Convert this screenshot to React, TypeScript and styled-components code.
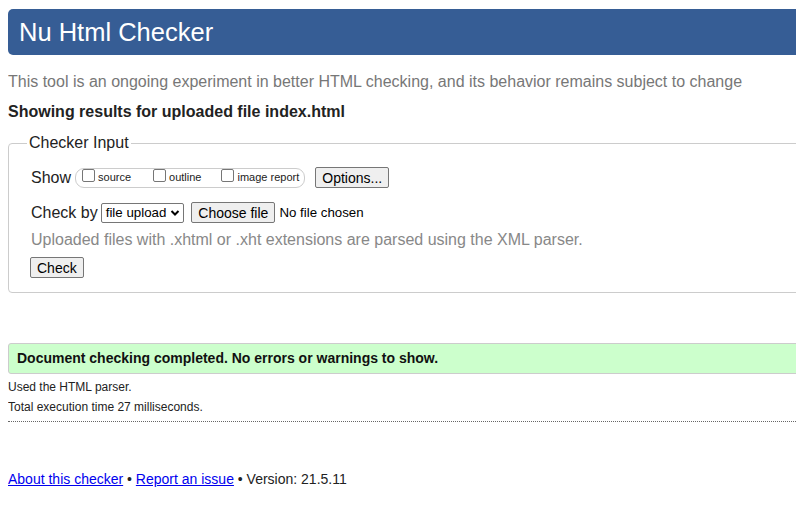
import React from "react";
import styled, { createGlobalStyle } from "styled-components";

const Global = createGlobalStyle`
  html { overflow: hidden; }
  body {
    margin: 8px 0 8px 8px;
    background: #fff;
    font-family: "Liberation Sans", Arial, sans-serif;
    color: #222;
    overflow: hidden;
  }
`;

const Page = styled.div`
  width: 830px;
`;

const Header = styled.h1`
  margin: 1px 0 0;
  height: 46px;
  padding-left: 11px;
  background: #365d95;
  border-radius: 5px;
  color: #fff;
  font-size: 25.5px;
  font-weight: normal;
  line-height: 46px;
`;

const Intro = styled.p`
  margin: 18px 0 0;
  font-size: 16px;
  line-height: 18px;
  color: #777;
`;

const Showing = styled.p`
  margin: 12px 0 0;
  font-size: 16px;
  line-height: 18px;
  font-weight: bold;
  color: #222;
`;

const Fieldset = styled.fieldset`
  margin: 13px 0 0;
  padding: 15px 22px 14px;
  border: 1px solid #ccc;
  border-radius: 4px;
  min-width: 0;
`;

const Legend = styled.legend`
  margin-left: -4px;
  padding: 0 2px;
  font-size: 16px;
  line-height: 18px;
  color: #222;
`;

const Row = styled.div<{ $mt?: number; $ml?: number }>`
  display: flex;
  align-items: center;
  margin-top: ${(p) => p.$mt ?? 0}px;
  margin-left: ${(p) => p.$ml ?? 0}px;
  font-size: 16px;
  line-height: 18px;
  color: #222;
`;

const Label = styled.span`
  margin-right: 3px;
`;

const Pill = styled.span`
  display: inline-flex;
  align-items: center;
  height: 18px;
  padding: 0 5px 0 2px;
  margin-left: 1px;
  border: 1px solid #ccc;
  border-radius: 9px;
  margin-right: 10px;
`;

const CheckItem = styled.label<{ $gap: number }>`
  display: inline-flex;
  align-items: center;
  margin-right: ${(p) => p.$gap}px;
  font-size: 11px;
  line-height: 13px;
  color: #222;
`;

const Box = styled.span`
  display: inline-block;
  width: 11px;
  height: 11px;
  border: 1px solid #767676;
  border-radius: 2px;
  background: #fff;
  margin: 0 3px 0 4px;
  position: relative;
  top: -2px;
`;

const Button = styled.button`
  height: 21px;
  padding: 0 6px;
  font-family: "Liberation Sans", Arial, sans-serif;
  font-size: 14px;
  color: #000;
  background: #efefef;
  border: 1px solid #767676;
  border-radius: 2px;
`;

const Select = styled.span`
  display: inline-flex;
  align-items: center;
  height: 18px;
  padding: 0 3px 0 4px;
  border: 1px solid #767676;
  border-radius: 2px;
  font-size: 13.3px;
  color: #000;
  margin-right: 7px;
  gap: 4px;
`;

const NoFile = styled.span`
  margin-left: 4px;
  font-size: 13.3px;
  color: #000;
`;

const Note = styled.p`
  margin: 8px 0 0;
  font-size: 16px;
  line-height: 18px;
  color: #888;
`;

const Success = styled.div`
  margin-top: 50px;
  height: 29px;
  padding-left: 8px;
  background: #ccffcc;
  border: 1px solid #ccc;
  border-radius: 3px;
  font-size: 14px;
  font-weight: bold;
  line-height: 29px;
  color: #111;
`;

const Small = styled.p<{ $mt: number }>`
  margin: ${(p) => p.$mt}px 0 0;
  font-size: 12px;
  line-height: 14px;
  color: #222;
`;

const Divider = styled.hr`
  margin: 7px 0 0;
  border: none;
  border-top: 1px dotted #666;
  width: 788px;
`;

const Footer = styled.p`
  margin: 49px 0 0;
  font-size: 14px;
  line-height: 16px;
  color: #222;
`;

const Link = styled.a`
  color: #0000ee;
  text-decoration: underline;
`;

export default function App() {
  return (
    <Page>
      <Global />
      <Header>Nu Html Checker</Header>
      <Intro>
        This tool is an ongoing experiment in better HTML checking, and its
        behavior remains subject to change
      </Intro>
      <Showing>Showing results for uploaded file index.html</Showing>
      <Fieldset>
        <Legend>Checker Input</Legend>
        <Row>
          <Label>Show</Label>
          <Pill>
            <CheckItem $gap={18}>
              <Box />
              source
            </CheckItem>
            <CheckItem $gap={16}>
              <Box />
              outline
            </CheckItem>
            <CheckItem $gap={0}>
              <Box />
              image report
            </CheckItem>
          </Pill>
          <Button>Options...</Button>
        </Row>
        <Row $mt={14}>
          <Label>Check by</Label>
          <Select>
            file upload
            <svg width="10" height="8" viewBox="0 0 10 8">
              <path d="M1.5 2 L5 5.5 L8.5 2" fill="none" stroke="#000" strokeWidth="2" />
            </svg>
          </Select>
          <Button>Choose file</Button>
          <NoFile>No file chosen</NoFile>
        </Row>
        <Note>Uploaded files with .xhtml or .xht extensions are parsed using the XML parser.</Note>
        <Row $mt={8} $ml={-1}>
          <Button>Check</Button>
        </Row>
      </Fieldset>
      <Success>Document checking completed. No errors or warnings to show.</Success>
      <Small $mt={6}>Used the HTML parser.</Small>
      <Small $mt={6}>Total execution time 27 milliseconds.</Small>
      <Divider />
      <Footer>
        <Link href="#">About this checker</Link> • <Link href="#">Report an issue</Link> •
        Version: 21.5.11
      </Footer>
    </Page>
  );
}
